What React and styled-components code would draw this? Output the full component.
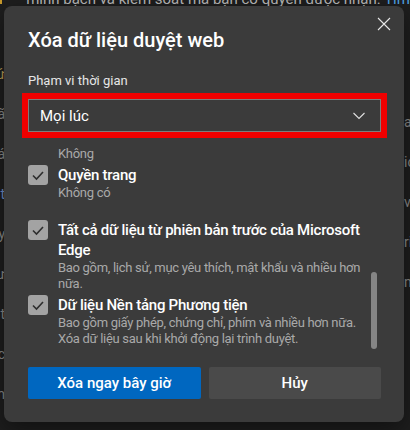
import { useLayoutEffect, useRef } from "react";
import styled, { createGlobalStyle } from "styled-components";

const Global = createGlobalStyle`
  html, body { margin: 0; padding: 0; background: #1e1e1e; }
  body { font-family: Roboto, "Liberation Sans", sans-serif; }
`;

const Page = styled.div`
  position: relative;
  width: 410px;
  height: 430px;
  overflow: hidden;
  background: #1e1e1e;
`;

const Backdrop = styled.div`
  display: flex;
  flex-direction: column;
  height: 100%;
  color: #8a8a8a;
  font-size: 14px;
`;

const TopLine = styled.div`
  display: flex;
  align-items: flex-start;
  gap: 24px;
  margin-top: -10px;
  white-space: nowrap;
  color: #b9b9b9;
  font-size: 15px;
  line-height: 18px;
  span { color: #4ea3e6; }
`;

const Goldmark = styled.div`
  width: 26px;
  height: 14px;
  background: linear-gradient(90deg, #c99b2c 0 40%, transparent 40% 60%, #c99b2c 60%);
`;

const Rails = styled.div`
  flex: 1;
  display: flex;
  justify-content: space-between;
`;

const Rail = styled.div`
  width: ${(p) => p.$width}px;
  overflow: hidden;
  display: flex;
  flex-direction: column;
  align-items: ${(p) => (p.$end ? "flex-end" : "flex-start")};
  gap: 24px;
  padding-top: ${(p) => p.$top}px;
  white-space: nowrap;
`;

const RailWord = styled.span`
  color: ${(p) => p.$tone || "#8a8a8a"};
`;

const Dialog = styled.div`
  position: absolute;
  left: 4px;
  top: 6px;
  width: 400px;
  box-sizing: border-box;
  padding: 20px 23px 23px 24px;
  background: #3b3b3b;
  border-radius: 8px;
  box-shadow: 0 8px 24px rgba(0, 0, 0, 0.45);
  color: #fff;
`;

const Close = styled.button`
  position: absolute;
  top: 11px;
  right: 13px;
  width: 14px;
  height: 14px;
  padding: 0;
  border: 0;
  background: none;
  display: flex;
`;

const Title = styled.h1`
  margin: 0;
  font-size: 20px;
  line-height: 28px;
  font-weight: 500;
`;

const Label = styled.div`
  margin-top: 18px;
  font-size: 13px;
  line-height: 18px;
  color: #e6e6e6;
`;

const Select = styled.div`
  margin-top: 9px;
  height: 33px;
  box-sizing: border-box;
  border: 1px solid #7d7d7d;
  outline: 6px solid #f00000;
  display: flex;
  align-items: center;
  justify-content: space-between;
  padding: 0 15px 0 11px;
  font-size: 15px;
  color: #fff;
`;

const List = styled.div`
  margin-top: 15px;
  height: 208px;
  display: flex;
`;

const Viewport = styled.div`
  flex: 1;
  overflow: hidden;
`;

const Track = styled.div`
  width: 6px;
  margin: 0 4px 0 0;
  display: flex;
  flex-direction: column;
`;

const Thumb = styled.div`
  margin-top: 125px;
  height: 77px;
  border-radius: 3px;
  background: #858585;
`;

const Item = styled.div`
  display: flex;
  gap: 10px;
  margin-bottom: ${(p) => p.$space}px;
`;

const Box = styled.div`
  flex: none;
  width: 20px;
  height: 20px;
  border-radius: 3px;
  background: #a3a3a3;
  display: flex;
  align-items: center;
  justify-content: center;
`;

const Text = styled.div`
  flex: 1;
`;

const ItemTitle = styled.div`
  font-size: 15px;
  line-height: 20px;
  font-weight: 500;
  letter-spacing: -0.25px;
  color: #fff;
`;

const ItemDesc = styled.div`
  font-size: 13px;
  line-height: 16px;
  letter-spacing: -0.3px;
  color: #a9a9a9;
`;

const Actions = styled.div`
  margin-top: 12px;
  display: grid;
  grid-template-columns: 1fr 1fr;
  gap: 8px;
`;

const Button = styled.button`
  height: 32px;
  border: 0;
  border-radius: 2px;
  background: ${(p) => (p.$primary ? "#0067c0" : "#4a4a4a")};
  color: #fff;
  font-family: inherit;
  font-size: 15px;
  font-weight: 500;
`;

const Check = () => (
  <svg width="20" height="20" viewBox="0 0 20 20">
    <path d="M5 10.5l3.5 3.5 6.5-7" fill="none" stroke="#2e2e2e" strokeWidth="1.6" />
  </svg>
);

const items = [
  { title: "Cookie và dữ liệu trang web khác", desc: ["Không"], space: 3 },
  { title: "Quyền trang", desc: ["Không có"], space: 19 },
  {
    title: "Tất cả dữ liệu từ phiên bản trước của Microsoft Edge",
    desc: ["Bao gồm, lịch sử, mục yêu thích, mật khẩu và nhiều hơn nữa."],
    space: 3,
  },
  {
    title: "Dữ liệu Nền tảng Phương tiện",
    desc: [
      "Bao gồm giấy phép, chứng chỉ, phím và nhiều hơn nữa.",
      "Xóa dữ liệu sau khi khởi động lại trình duyệt.",
    ],
    space: 10,
  },
];

const leftWords = [
  ["Thứ", "#b89a55"],
  ["Đã"],
  ["Lá"],
  ["Cài đặt", "#6f8fc9"],
  ["Tùy"],
  ["Riêng tư"],
  ["Bảo mật"],
  ["Khác"],
  ["Thêm"],
];

const rightWords = ["a", "ic", "vì", "ri", "n"];

export default function App() {
  const ref = useRef(null);
  useLayoutEffect(() => {
    if (ref.current) ref.current.scrollTop = 21;
  }, []);

  return (
    <Page>
      <Global />
      <Backdrop>
        <TopLine>
          <Goldmark />
          <div>
            minh bạch và kiểm soát mà bạn có quyền được nhận. <span>Tìm</span>
          </div>
        </TopLine>
        <Rails>
          <Rail $width={5} $end $top={58}>
            {leftWords.map(([w, tone]) => (
              <RailWord key={w} $tone={tone}>
                {w}
              </RailWord>
            ))}
          </Rail>
          <Rail $width={6} $top={106}>
            {rightWords.map((w) => (
              <RailWord key={w}>{w}</RailWord>
            ))}
          </Rail>
        </Rails>
      </Backdrop>

      <Dialog>
        <Close aria-label="Đóng">
          <svg width="14" height="14" viewBox="0 0 14 14">
            <path d="M1 1l12 12M13 1L1 13" stroke="#e8e8e8" strokeWidth="1.1" />
          </svg>
        </Close>
        <Title>Xóa dữ liệu duyệt web</Title>
        <Label>Phạm vi thời gian</Label>
        <Select>
          <span>Mọi lúc</span>
          <svg width="12" height="8" viewBox="0 0 12 8">
            <path d="M0.5 1l5.5 5.5L11.5 1" fill="none" stroke="#e0e0e0" strokeWidth="1.1" />
          </svg>
        </Select>

        <List>
          <Viewport ref={ref}>
            {items.map((it) => (
              <Item key={it.title} $space={it.space}>
                <Box>
                  <Check />
                </Box>
                <Text>
                  <ItemTitle>{it.title}</ItemTitle>
                  {it.desc.map((d) => (
                    <ItemDesc key={d}>{d}</ItemDesc>
                  ))}
                </Text>
              </Item>
            ))}
          </Viewport>
          <Track>
            <Thumb />
          </Track>
        </List>

        <Actions>
          <Button $primary>Xóa ngay bây giờ</Button>
          <Button>Hủy</Button>
        </Actions>
      </Dialog>
    </Page>
  );
}
